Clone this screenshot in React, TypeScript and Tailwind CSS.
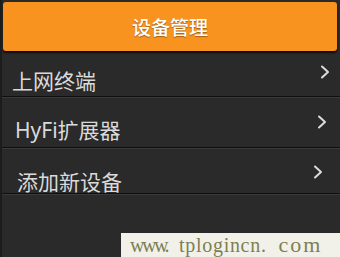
import React from 'react';

const rows = [
  { label: '上网终端', h: 'h-[44px]', textTop: 'mt-[20px]', textLeft: 'pl-[10px]', chevTop: 'mt-[13px]', chevRight: 'pr-[10px]' },
  { label: 'HyFi扩展器', h: 'h-[49px]', textTop: 'mt-[23px]', textLeft: 'pl-[13px]', chevTop: 'mt-[17px]', chevRight: 'pr-[13px]' },
  { label: '添加新设备', h: 'h-[44px]', textTop: 'mt-[24px]', textLeft: 'pl-[15px]', chevTop: 'mt-[16px]', chevRight: 'pr-[17px]' },
];

const Chevron = () => (
  <svg width="10" height="14" viewBox="0 0 10 14" fill="none">
    <polyline points="2,1.5 8,7 2,12.5" stroke="#dcdcdc" strokeWidth="2" strokeLinecap="round" strokeLinejoin="round" />
  </svg>
);

const App = () => {
  return (
    <div
      className="relative w-[340px] h-[257px] overflow-hidden bg-[#2a2a2a] border-l-2 border-[#1c1c1c]"
      style={{ fontFamily: '"Noto Sans", "Noto Sans CJK SC", sans-serif' }}
    >
      <div className="mt-[2px] ml-[1px] mr-[3px] h-[49px] rounded-[3px] bg-[#f9931f] flex items-center justify-center shadow-[0_2px_2px_rgba(0,0,0,0.7)]">
        <span className="mt-[3px] text-white text-[19px] font-medium leading-none [text-shadow:0_1px_1px_rgba(0,0,0,0.35)]">设备管理</span>
      </div>

      <div className="mt-[1px]">
        {rows.map((row) => (
          <div key={row.label}>
            <div className={`${row.h} flex items-start justify-between`}>
              <span className={`${row.textTop} ${row.textLeft} text-[21px] leading-[19px] text-[#dadada]`}>{row.label}</span>
              <span className={`${row.chevTop} ${row.chevRight}`}>
                <Chevron />
              </span>
            </div>
            <div className="h-px bg-[#0f0f0f]" />
            <div className="h-px bg-[#3a3a3a]" />
          </div>
        ))}
      </div>

      {/* watermark over the screenshot */}
      <div
        className="absolute left-[119px] top-[233px] w-[221px] h-[24px] bg-[#f1f1e9] flex items-center whitespace-nowrap pl-[9px] text-[20px] leading-none text-[#7f7f52]"
        style={{ fontFamily: '"Liberation Serif", serif' }}
      >
        <span className="tracking-[-2.5px]">www.</span>
        <span className="ml-[12px] tracking-[0.7px]">tplogincn.</span>
        <span className="ml-[12px] text-[22px] tracking-[2px]">com</span>
      </div>
    </div>
  );
};

export default App;
